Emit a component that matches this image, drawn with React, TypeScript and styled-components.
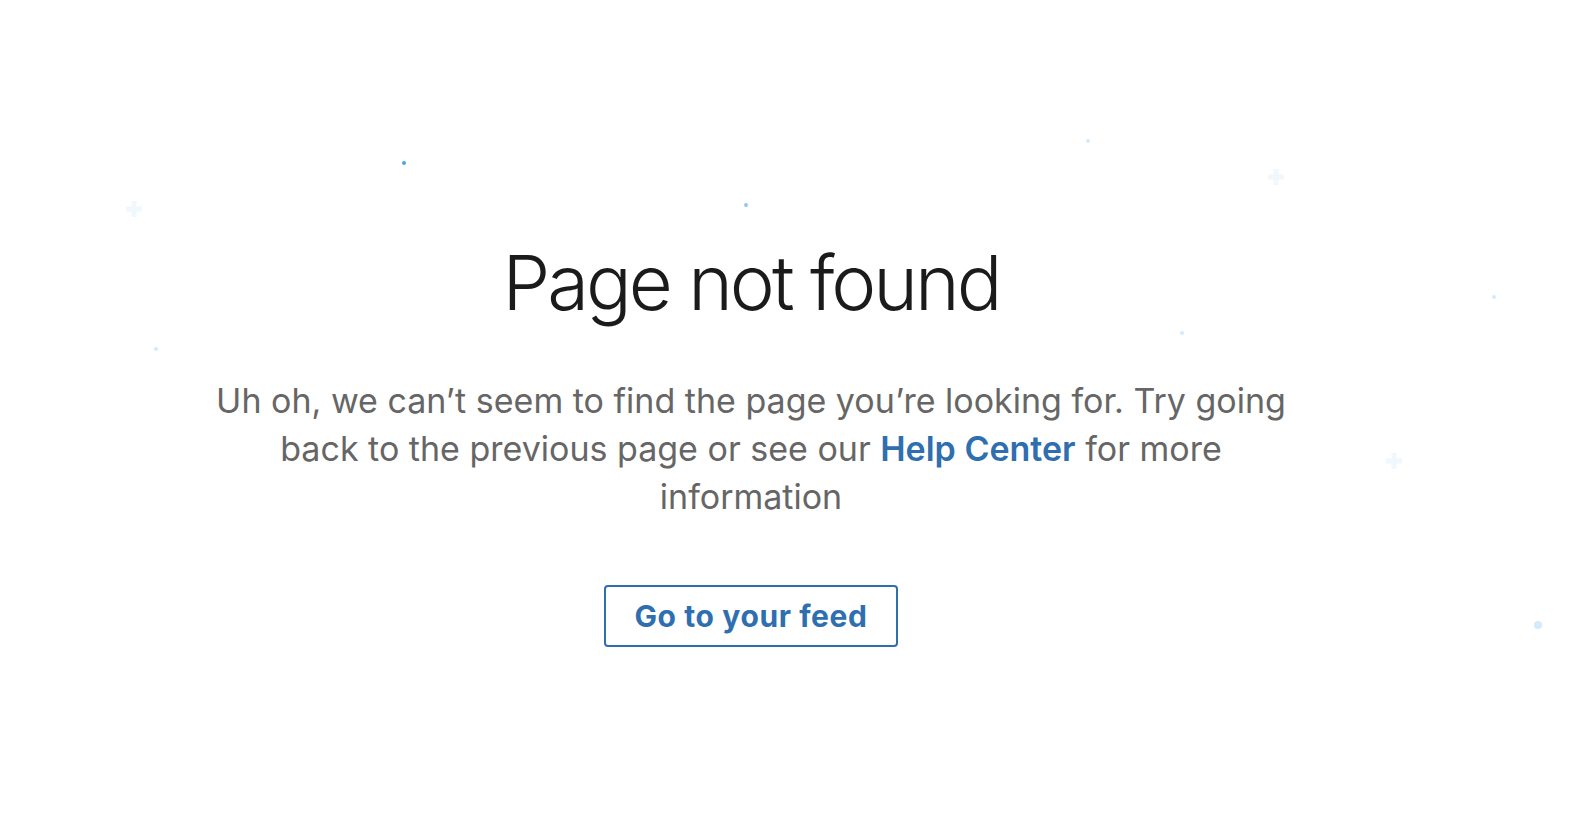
import { createGlobalStyle, styled } from "styled-components";

const GlobalStyle = createGlobalStyle`
  html, body {
    margin: 0;
    padding: 0;
    background: #ffffff;
  }
  body {
    font-family: Inter, "Noto Sans", "Liberation Sans", sans-serif;
  }
`;

type Particle = {
  kind: "dot" | "plus";
  x: number;
  y: number;
  size: number;
  color: string;
};

const particles: Particle[] = [
  { kind: "dot", x: 404, y: 163, size: 4, color: "#4ba6e0" },
  { kind: "dot", x: 746, y: 205, size: 4, color: "#8ecaef" },
  { kind: "dot", x: 156, y: 349, size: 4, color: "#d3eafb" },
  { kind: "dot", x: 1088, y: 141, size: 4, color: "#d3eafb" },
  { kind: "dot", x: 1182, y: 333, size: 4, color: "#d3eafb" },
  { kind: "dot", x: 1494, y: 297, size: 4, color: "#d3eafb" },
  { kind: "dot", x: 1538, y: 625, size: 8, color: "#d3eafb" },
  { kind: "plus", x: 134, y: 209, size: 16, color: "#f1f8fd" },
  { kind: "plus", x: 1276, y: 177, size: 16, color: "#f1f8fd" },
  { kind: "plus", x: 1394, y: 461, size: 16, color: "#f1f8fd" },
];

export default function App() {
  return (
    <>
      <GlobalStyle />
      <Page>
        <Sky aria-hidden>
          {particles.map((p, i) =>
            p.kind === "dot" ? (
              <Dot key={i} $color={p.color} $size={p.size} style={{ left: p.x - p.size / 2, top: p.y - p.size / 2 }} />
            ) : (
              <Plus key={i} $color={p.color} $size={p.size} style={{ left: p.x - p.size / 2, top: p.y - p.size / 2 }} />
            )
          )}
        </Sky>
        <Content>
          <Title>Page not found</Title>
          <Message>
            Uh oh, we can’t seem to find the page you’re looking for. Try going
            back to the previous page or see our <HelpLink href="#">Help Center</HelpLink> for
            more information
          </Message>
          <FeedButton href="#">Go to your feed</FeedButton>
        </Content>
      </Page>
    </>
  );
}

const Page = styled.main`
  position: relative;
  min-height: 826px;
  display: flex;
  justify-content: center;
  padding: 235px 68px 0 0;
  box-sizing: border-box;
  overflow: hidden;
`;

const Sky = styled.div`
  position: absolute;
  inset: 0;
  pointer-events: none;
`;

const Dot = styled.span<{ $color: string; $size: number }>`
  position: absolute;
  width: ${(p) => p.$size}px;
  height: ${(p) => p.$size}px;
  border-radius: 50%;
  background: ${(p) => p.$color};
`;

const Plus = styled.span<{ $color: string; $size: number }>`
  position: absolute;
  width: ${(p) => p.$size}px;
  height: ${(p) => p.$size}px;

  &::before,
  &::after {
    content: "";
    position: absolute;
    background: ${(p) => p.$color};
  }
  &::before {
    left: 0;
    right: 0;
    top: 50%;
    height: 5px;
    transform: translateY(-50%);
  }
  &::after {
    top: 0;
    bottom: 0;
    left: 50%;
    width: 5px;
    transform: translateX(-50%);
  }
`;

const Content = styled.div`
  position: relative;
  display: flex;
  flex-direction: column;
  align-items: center;
  max-width: 1110px;
  text-align: center;
`;

const Title = styled.h1`
  margin: 0;
  font-size: 76px;
  line-height: 94px;
  font-weight: 300;
  color: #1b1b1b;
  letter-spacing: -3px;
`;

const Message = styled.p`
  margin: 48px 0 0;
  font-size: 34px;
  line-height: 48px;
  font-weight: 400;
  color: #666666;
`;

const HelpLink = styled.a`
  color: #2f6faf;
  font-weight: 600;
  text-decoration: none;
`;

const FeedButton = styled.a`
  margin-top: 64px;
  display: inline-flex;
  align-items: center;
  justify-content: center;
  width: 294px;
  height: 62px;
  box-sizing: border-box;
  border: 2px solid #2f6faf;
  border-radius: 4px;
  color: #2f6faf;
  font-size: 30px;
  font-weight: 700;
  letter-spacing: 0.6px;
  text-decoration: none;
`;
